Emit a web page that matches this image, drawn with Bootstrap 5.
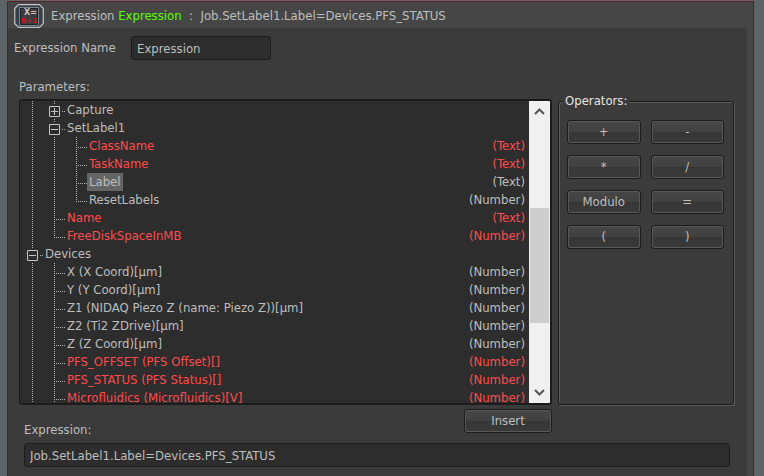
<!DOCTYPE html>
<html lang="en" data-bs-theme="dark">
<head>
<meta charset="utf-8">
<meta name="viewport" content="width=device-width, initial-scale=1">
<title>Expression</title>
<link href="https://cdn.jsdelivr.net/npm/bootstrap@5.3.0/dist/css/bootstrap.min.css" rel="stylesheet">
<style>
:root { --ink: #bebebe; --field: #2d2d2d; --edge: #1c1c1c; --alert: #ff4b4b; }
body { font: 13px/18px Tahoma, "DejaVu Sans Condensed", "DejaVu Sans", sans-serif; color: var(--ink); background: #5d6366; padding: 1px 10px 0 7px; }
.task-frame { border: 1px solid #5c2020; border-bottom: 0; background: #464646; padding-right: 6px; }
.task-title { height: 26px; padding: 2px 0 0 6px; white-space: pre; }
.task-heading { font-size: 13px; line-height: 18px; color: var(--ink); margin: 0 0 0 7px; font-weight: 400; }
.task-name { color: #5cff00; }
.task-body { background: #3b3b3b; padding: 8px 12px 9px 6px; }
.field { background: var(--field); border: 1px solid var(--edge); border-radius: 3px; color: var(--ink); height: 24px; padding: 0 5px; outline: 0; }
.name-field { width: 140px; }
.name-label { width: 117px; }
.params-label { margin: 18px 0 3px 5px; }
.work-area { margin-left: 5px; gap: 6px; min-height: 0; }
.tree-box { background: var(--field); border: 2px solid var(--edge); border-width: 2px 2px 2px 1px; border-radius: 3px; }
.tree { padding: 0 4px 0 1px; }
.tree li { height: 18px; }
.tree-label { padding: 0 2px; }
.picked { background: #656565; }
.alerted { color: var(--alert); }
.guide {
  --v: repeating-linear-gradient(#b4b4b4 0 1px, transparent 1px 2px);
  --h: repeating-linear-gradient(90deg, #b4b4b4 0 1px, transparent 1px 2px);
  width: 22px; height: 18px; flex: none; background-repeat: no-repeat;
}
.guide-line { background-image: var(--v); background-size: 1px 18px; background-position: 11px 0; }
.guide-tee, .guide-end { background-image: var(--v), var(--h); background-position: 11px 0, 11px 10px; }
.guide-tee { background-size: 1px 18px, 11px 1px; }
.guide-end { background-size: 1px 11px, 11px 1px; }
.toggle { display: block; width: 13px; height: 13px; margin: 4px 0 0 5px; padding: 0; border: 0; background: var(--field); }
.toggle svg, .arrow svg { display: block; }
.scroller { width: 21px; background: #f0f0f0; }
.arrow { border: 0; padding: 0; height: 20px; background: none; }
.track-above { flex: 87; }
.thumb { flex: 115; margin: 0 1px; background: #cdcdcd; }
.track-below { flex: 59; }
.operators { width: 177px; flex: none; margin-top: -7px; }
.operators-frame { border: 1px solid var(--edge); box-shadow: inset 1px 1px #5a5a5a, 1px 1px #5a5a5a; border-radius: 3px; margin: 0 1px 0 0; padding: 18px 9px 0 8px; }
.operators-title { color: #e4e4e4; margin: 0 0 -9px 5px; padding: 0 2px; background: #3b3b3b; position: relative; z-index: 1; }
.operator-grid { display: grid; grid-template-columns: 1fr 1fr; gap: 11px 10px; }
.push { height: 24px; padding: 0; color: var(--ink); border: 1px solid var(--edge); border-radius: 3px; box-shadow: inset 0 0 0 1px #585858; background: linear-gradient(#474747, #404040 50%, #363636 50%, #3a3a3a); }
.insert-row { height: 39px; padding: 4px 183px 0 10px; }
.insert { width: 88px; }
.result-label { margin-bottom: 4px; }
.result { margin: 0 5px 0 10px; }
</style>
<script src="https://cdn.jsdelivr.net/npm/bootstrap@5.3.0/dist/js/bootstrap.bundle.min.js"></script>
</head>
<body class="vh-100 d-flex flex-column overflow-hidden">
<main class="task-frame flex-grow-1 d-flex flex-column overflow-hidden">
  <header class="task-title d-flex align-items-center">
    <svg width="30" height="24" viewBox="0 0 30 24" aria-hidden="true">
      <path d="M4.500 .7H25.500L29.300 4.500V19.500L25.500 23.300H4.500L.7 19.500V4.500Z" fill="#34414d" stroke="#c4c4c4" stroke-width="1.200" stroke-linejoin="round"/>
      <rect x="5.500" y="3.500" width="19" height="18" fill="#3e3c3c" stroke="#7d8388"/>
      <rect x="6.500" y="4.500" width="17" height="16" fill="none" stroke="#1d2024"/>
      <text x="10" y="11" font-family="DejaVu Sans, sans-serif" font-weight="bold" font-size="8" fill="#c4c4c4">X=</text>
      <text x="7" y="19" font-family="DejaVu Sans, sans-serif" font-weight="bold" font-size="7" fill="#d80f1e">B+1</text>
    </svg>
    <h1 class="task-heading">Expression <span class="task-name">Expression</span>  :  Job.SetLabel1.Label=Devices.PFS_STATUS</h1>
  </header>

  <form class="task-body flex-grow-1 d-flex flex-column overflow-hidden">
    <div class="d-flex align-items-center">
      <label class="name-label" for="exprName">Expression Name</label>
      <input class="field name-field" id="exprName" type="text" value="Expression">
    </div>
    <div class="params-label" id="paramsLabel">Parameters:</div>

    <div class="work-area flex-grow-1 d-flex">
      <div class="tree-box flex-grow-1 d-flex overflow-hidden">
        <ul class="tree list-unstyled m-0 flex-grow-1 overflow-hidden" role="tree" aria-labelledby="paramsLabel">
          <li class="d-flex" role="treeitem"><i class="guide guide-line"></i><span class="guide guide-tee"><button class="toggle" type="button" aria-label="Expand Capture"><svg width="13" height="13" fill="none" stroke="#c4c4c4"><path d="M1.500 1.500h10v10h-10zM3 6.500h7M6.500 3v7"/></svg></button></span><span class="tree-label">Capture</span></li>
          <li class="d-flex" role="treeitem"><i class="guide guide-line"></i><span class="guide guide-tee"><button class="toggle" type="button" aria-label="Collapse SetLabel1"><svg width="13" height="13" fill="none" stroke="#c4c4c4"><path d="M1.500 1.500h10v10h-10zM3 6.500h7"/></svg></button></span><span class="tree-label">SetLabel1</span></li>
          <li class="d-flex alerted" role="treeitem"><i class="guide guide-line"></i><i class="guide guide-line"></i><i class="guide guide-tee"></i><span class="tree-label">ClassName</span><span class="ms-auto">(Text)</span></li>
          <li class="d-flex alerted" role="treeitem"><i class="guide guide-line"></i><i class="guide guide-line"></i><i class="guide guide-tee"></i><span class="tree-label">TaskName</span><span class="ms-auto">(Text)</span></li>
          <li class="d-flex" role="treeitem" aria-selected="true"><i class="guide guide-line"></i><i class="guide guide-line"></i><i class="guide guide-tee"></i><span class="tree-label picked">Label</span><span class="ms-auto">(Text)</span></li>
          <li class="d-flex" role="treeitem"><i class="guide guide-line"></i><i class="guide guide-line"></i><i class="guide guide-end"></i><span class="tree-label">ResetLabels</span><span class="ms-auto">(Number)</span></li>
          <li class="d-flex alerted" role="treeitem"><i class="guide guide-line"></i><i class="guide guide-tee"></i><span class="tree-label">Name</span><span class="ms-auto">(Text)</span></li>
          <li class="d-flex alerted" role="treeitem"><i class="guide guide-line"></i><i class="guide guide-end"></i><span class="tree-label">FreeDiskSpaceInMB</span><span class="ms-auto">(Number)</span></li>
          <li class="d-flex" role="treeitem"><span class="guide guide-tee"><button class="toggle" type="button" aria-label="Collapse Devices"><svg width="13" height="13" fill="none" stroke="#c4c4c4"><path d="M1.500 1.500h10v10h-10zM3 6.500h7"/></svg></button></span><span class="tree-label">Devices</span></li>
          <li class="d-flex" role="treeitem"><i class="guide guide-line"></i><i class="guide guide-tee"></i><span class="tree-label">X (X Coord)[µm]</span><span class="ms-auto">(Number)</span></li>
          <li class="d-flex" role="treeitem"><i class="guide guide-line"></i><i class="guide guide-tee"></i><span class="tree-label">Y (Y Coord)[µm]</span><span class="ms-auto">(Number)</span></li>
          <li class="d-flex" role="treeitem"><i class="guide guide-line"></i><i class="guide guide-tee"></i><span class="tree-label">Z1 (NIDAQ Piezo Z (name: Piezo Z))[µm]</span><span class="ms-auto">(Number)</span></li>
          <li class="d-flex" role="treeitem"><i class="guide guide-line"></i><i class="guide guide-tee"></i><span class="tree-label">Z2 (Ti2 ZDrive)[µm]</span><span class="ms-auto">(Number)</span></li>
          <li class="d-flex" role="treeitem"><i class="guide guide-line"></i><i class="guide guide-tee"></i><span class="tree-label">Z (Z Coord)[µm]</span><span class="ms-auto">(Number)</span></li>
          <li class="d-flex alerted" role="treeitem"><i class="guide guide-line"></i><i class="guide guide-tee"></i><span class="tree-label">PFS_OFFSET (PFS Offset)[]</span><span class="ms-auto">(Number)</span></li>
          <li class="d-flex alerted" role="treeitem"><i class="guide guide-line"></i><i class="guide guide-tee"></i><span class="tree-label">PFS_STATUS (PFS Status)[]</span><span class="ms-auto">(Number)</span></li>
          <li class="d-flex alerted" role="treeitem"><i class="guide guide-line"></i><i class="guide guide-tee"></i><span class="tree-label">Microfluidics (Microfluidics)[V]</span><span class="ms-auto">(Number)</span></li>
        </ul>
        <div class="scroller d-flex flex-column flex-shrink-0">
          <button class="arrow" type="button" aria-label="Scroll up"><svg width="21" height="20" fill="none" stroke="#555" stroke-width="2"><path d="M6 13l4.500-4.500L15 13"/></svg></button>
          <div class="track-above"></div><div class="thumb"></div><div class="track-below"></div>
          <button class="arrow" type="button" aria-label="Scroll down"><svg width="21" height="20" fill="none" stroke="#555" stroke-width="2"><path d="M6 7l4.500 4.500L15 7"/></svg></button>
        </div>
      </div>

      <div class="operators d-flex flex-column align-items-start" role="group" aria-labelledby="opsTitle">
        <div class="operators-title" id="opsTitle">Operators:</div>
        <div class="operators-frame align-self-stretch flex-grow-1">
          <div class="operator-grid">
            <button class="push" type="button">+</button><button class="push" type="button">-</button>
            <button class="push" type="button">*</button><button class="push" type="button">/</button>
            <button class="push" type="button">Modulo</button><button class="push" type="button">=</button>
            <button class="push" type="button">(</button><button class="push" type="button">)</button>
          </div>
        </div>
      </div>
    </div>

    <div class="insert-row d-flex justify-content-between">
      <label class="result-label align-self-end" for="exprText">Expression:</label>
      <button class="push insert" type="button">Insert</button>
    </div>
    <div class="result">
      <input class="field w-100 d-block" id="exprText" type="text" value="Job.SetLabel1.Label=Devices.PFS_STATUS">
    </div>
  </form>
</main>
</body>
</html>
